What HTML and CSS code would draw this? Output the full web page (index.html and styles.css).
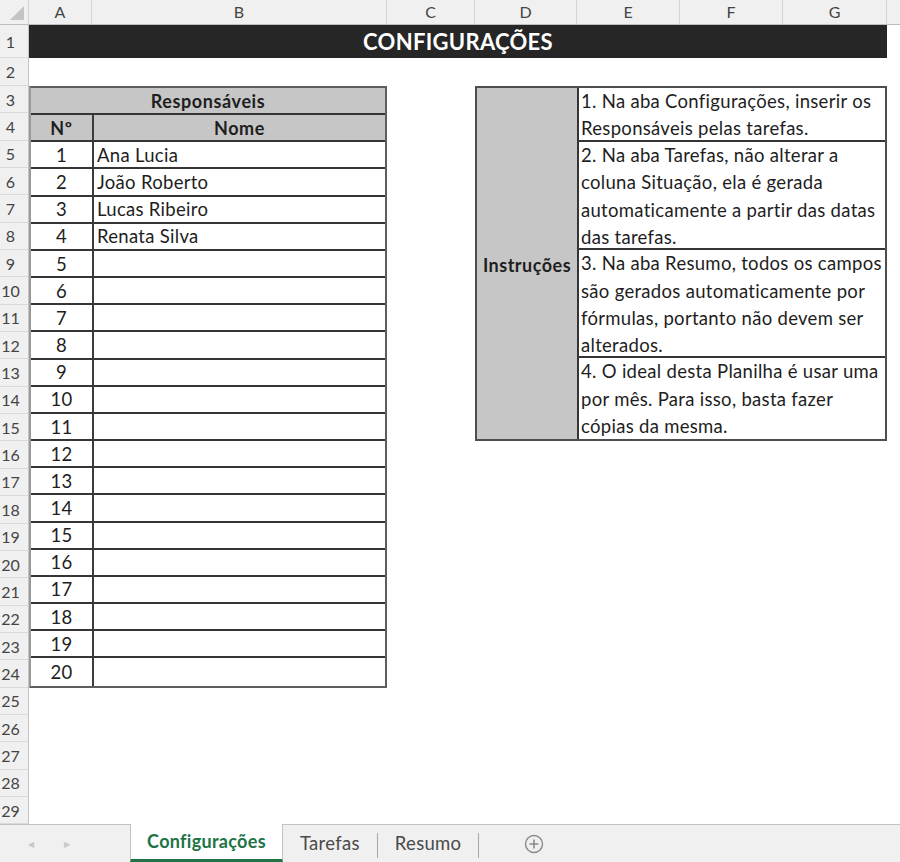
FILE: index.html
```html
<!DOCTYPE html>
<html lang="pt">
<head>
<meta charset="utf-8">
<title>Configurações</title>
<link rel="stylesheet" href="styles.css">
</head>
<body>
<div class="app">
  <div class="sheet">
    <div class="corner"><svg width="14" height="14" viewBox="0 0 14 14"><polygon points="14,0 14,14 0,14" fill="#c4c4c4"/></svg></div>
    <div class="colhd">A</div>
    <div class="colhd">B</div>
    <div class="colhd">C</div>
    <div class="colhd">D</div>
    <div class="colhd">E</div>
    <div class="colhd">F</div>
    <div class="colhd">G</div>
    <div class="colhd last"></div>

    <div class="rowhd r1">1</div>
    <div class="rowhd">2</div>
    <div class="rowhd">3</div>
    <div class="rowhd">4</div>
    <div class="rowhd">5</div>
    <div class="rowhd">6</div>
    <div class="rowhd">7</div>
    <div class="rowhd">8</div>
    <div class="rowhd">9</div>
    <div class="rowhd">10</div>
    <div class="rowhd">11</div>
    <div class="rowhd">12</div>
    <div class="rowhd">13</div>
    <div class="rowhd">14</div>
    <div class="rowhd">15</div>
    <div class="rowhd">16</div>
    <div class="rowhd">17</div>
    <div class="rowhd">18</div>
    <div class="rowhd">19</div>
    <div class="rowhd">20</div>
    <div class="rowhd">21</div>
    <div class="rowhd">22</div>
    <div class="rowhd">23</div>
    <div class="rowhd">24</div>
    <div class="rowhd">25</div>
    <div class="rowhd">26</div>
    <div class="rowhd">27</div>
    <div class="rowhd">28</div>
    <div class="rowhd">29</div>

    <div class="title">CONFIGURAÇÕES</div>

    <div class="resp">
      <div class="resp-title">Responsáveis</div>
      <div class="hd num">Nº</div><div class="hd">Nome</div>
      <div class="num">1</div><div class="name">Ana Lucia</div>
      <div class="num">2</div><div class="name">João Roberto</div>
      <div class="num">3</div><div class="name">Lucas Ribeiro</div>
      <div class="num">4</div><div class="name">Renata Silva</div>
      <div class="num">5</div><div class="name"></div>
      <div class="num">6</div><div class="name"></div>
      <div class="num">7</div><div class="name"></div>
      <div class="num">8</div><div class="name"></div>
      <div class="num">9</div><div class="name"></div>
      <div class="num">10</div><div class="name"></div>
      <div class="num">11</div><div class="name"></div>
      <div class="num">12</div><div class="name"></div>
      <div class="num">13</div><div class="name"></div>
      <div class="num">14</div><div class="name"></div>
      <div class="num">15</div><div class="name"></div>
      <div class="num">16</div><div class="name"></div>
      <div class="num">17</div><div class="name"></div>
      <div class="num">18</div><div class="name"></div>
      <div class="num">19</div><div class="name"></div>
      <div class="num last">20</div><div class="name last"></div>
    </div>

    <div class="instr">
      <div class="instr-label">Instruções</div>
      <div class="step">1. Na aba Configurações, inserir os<br>Responsáveis pelas tarefas.</div>
      <div class="step">2. Na aba Tarefas, não alterar a<br>coluna Situação, ela é gerada<br>automaticamente a partir das datas<br>das tarefas.</div>
      <div class="step">3. Na aba Resumo, todos os campos<br>são gerados automaticamente por<br>fórmulas, portanto não devem ser<br>alterados.</div>
      <div class="step last">4. O ideal desta Planilha é usar uma<br>por mês. Para isso, basta fazer<br>cópias da mesma.</div>
    </div>
  </div>

  <div class="tabbar">
    <div class="nav">
      <span class="arrow">&#9664;</span>
      <span class="arrow">&#9654;</span>
    </div>
    <div class="tab active">Configurações</div>
    <div class="tab">Tarefas</div>
    <div class="sep"></div>
    <div class="tab">Resumo</div>
    <div class="sep"></div>
    <div class="add">
      <svg width="20" height="20" viewBox="0 0 20 20"><circle cx="10" cy="10" r="8.5" fill="none" stroke="#8a8a8a" stroke-width="1.4"/><path d="M10 5.5v9M5.5 10h9" stroke="#8a8a8a" stroke-width="1.6"/></svg>
    </div>
  </div>
</div>
</body>
</html>
```

FILE: styles.css
```css
html, body {
  margin: 0;
  padding: 0;
  background: #ffffff;
}
body {
  width: 900px;
  height: 862px;
  overflow: hidden;
  font-family: Lato, "Liberation Sans", sans-serif;
  color: #1e1e1e;
}
.app {
  display: flex;
  flex-direction: column;
  height: 862px;
}
.sheet {
  display: grid;
  grid-template-columns: 29px 63px 295px 88px 102px 103px 103px 104px 1fr;
  grid-template-rows: 25px 33px 28px repeat(27, 27.35px);
  background: #ffffff;
}
.corner {
  grid-column: 1;
  grid-row: 1;
  background: #f0f0f0;
  border-right: 1px solid #d2d2d2;
  border-bottom: 1px solid #bdbdbd;
  box-sizing: border-box;
  display: flex;
  align-items: flex-end;
  justify-content: flex-end;
  padding: 0 4px 4px 0;
}
.colhd {
  grid-row: 1;
  background: #f0f0f0;
  border-right: 1px solid #d4d4d4;
  border-bottom: 1px solid #bdbdbd;
  box-sizing: border-box;
  text-align: center;
  font-size: 16px;
  line-height: 24px;
  color: #444;
}
.colhd.last {
  border-right: none;
}
.rowhd {
  grid-column: 1;
  background: #f0f0f0;
  border-right: 1px solid #c4c4c4;
  border-bottom: 1px solid #dadada;
  box-sizing: border-box;
  font-size: 16px;
  color: #444;
  display: flex;
  align-items: center;
  justify-content: center;
  padding-right: 7px;
}
.title {
  grid-column: 2 / 9;
  grid-row: 2;
  background: #262626;
  color: #ffffff;
  font-weight: 700;
  font-size: 22px;
  display: flex;
  align-items: center;
  justify-content: center;
  letter-spacing: 0.3px;
}
.resp {
  grid-column: 2 / 4;
  grid-row: 4 / 26;
  display: grid;
  grid-template-columns: 63px 1fr;
  grid-template-rows: repeat(22, 1fr);
  border: 2px solid #5e5e5e;
  border-left-color: #9a9a9a;
  box-sizing: border-box;
  font-size: 18.5px;
  letter-spacing: 0.3px;
}
.resp > div {
  border-bottom: 2px solid #353535;
  display: flex;
  align-items: center;
  min-height: 0;
}
.resp > div.last {
  border-bottom: none;
}
.resp-title {
  grid-column: 1 / 3;
  background: #c6c6c6;
  justify-content: center;
  font-weight: 700;
  font-size: 18px;
  letter-spacing: 0.6px;
}
.resp .hd {
  background: #c6c6c6;
  justify-content: center;
  font-weight: 700;
  font-size: 18px;
  letter-spacing: 0.6px;
}
.resp .num {
  justify-content: center;
  border-right: 2px solid #3c3c3c;
}
.resp .name {
  padding-left: 3px;
}
.instr {
  grid-column: 5 / 9;
  grid-row: 4 / 17;
  display: grid;
  grid-template-columns: 102px 1fr;
  grid-template-rows: 2fr 4fr 4fr 3fr;
  border: 2px solid #4e4e4e;
  box-sizing: border-box;
  font-size: 18.5px;
  letter-spacing: 0.3px;
}
.instr-label {
  grid-column: 1;
  grid-row: 1 / 5;
  background: #c6c6c6;
  border-right: 2px solid #353535;
  font-weight: 700;
  font-size: 18px;
  letter-spacing: 0.5px;
  display: flex;
  align-items: center;
  justify-content: center;
  padding-top: 2px;
}
.step {
  grid-column: 2;
  border-bottom: 2px solid #353535;
  line-height: 27.3px;
  padding-left: 2px;
  white-space: nowrap;
  overflow: hidden;
}
.step.last {
  border-bottom: none;
}
.tabbar {
  flex: 1;
  display: flex;
  align-items: stretch;
  background: #f0f0f0;
  border-top: 1px solid #c2c2c2;
  font-size: 18.5px;
  letter-spacing: 0.3px;
  color: #4a4a4a;
}
.nav {
  width: 130px;
  display: flex;
  align-items: center;
  padding-left: 28px;
  box-sizing: border-box;
  gap: 30px;
}
.arrow {
  font-size: 8px;
  color: #c8c8c8;
}
.tab {
  display: flex;
  align-items: center;
  padding: 0 17px;
  margin-top: -1px;
}
.tab.active {
  width: 153px;
  box-sizing: border-box;
  justify-content: center;
  padding: 0 0 2px 0;
  background: #ffffff;
  color: #217346;
  font-weight: 700;
  font-size: 18px;
  border-left: 1px solid #c2c2c2;
  border-right: 1px solid #c2c2c2;
  border-bottom: 3px solid #217346;
}
.sep {
  width: 1px;
  background: #a8a8a8;
  margin: 8px 0 4px 0;
}
.add {
  display: flex;
  align-items: center;
  padding-left: 45px;
}
```
